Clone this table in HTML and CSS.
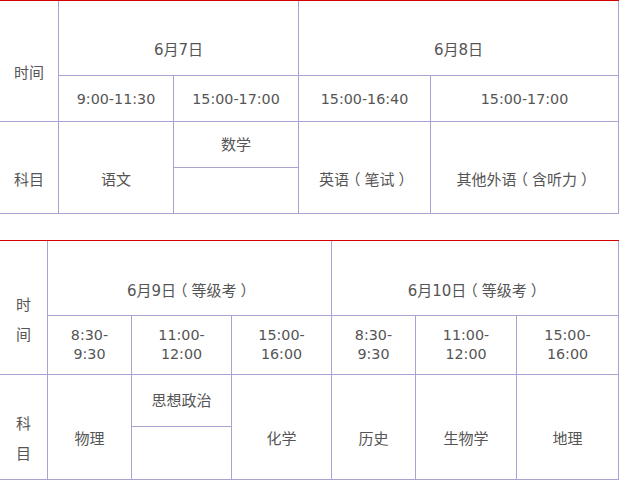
FILE: index.html
```html
<!DOCTYPE html>
<html lang="zh-CN">
<head>
<meta charset="utf-8">
<title>考试时间安排</title>
<link rel="stylesheet" href="styles.css">
</head>
<body>
<table class="exam t1">
  <colgroup>
    <col class="c59"><col class="c115"><col class="c125"><col class="c132"><col class="c188">
  </colgroup>
  <tr class="r75">
    <td rowspan="2" class="low">时间</td>
    <td colspan="2" class="low">6月7日</td>
    <td colspan="2" class="low">6月8日</td>
  </tr>
  <tr class="r46">
    <td class="tm">9:00-11:30</td>
    <td class="tm">15:00-17:00</td>
    <td class="tm">15:00-16:40</td>
    <td class="tm">15:00-17:00</td>
  </tr>
  <tr class="r46">
    <td rowspan="2" class="low">科目</td>
    <td rowspan="2" class="low">语文</td>
    <td>数学</td>
    <td rowspan="2" class="low">英语<span class="pn">（</span>笔试<span class="pn">）</span></td>
    <td rowspan="2" class="low">其他外语<span class="pn">（</span>含听力<span class="pn">）</span></td>
  </tr>
  <tr class="r46">
    <td></td>
  </tr>
</table>

<table class="exam t2">
  <colgroup>
    <col class="c48"><col class="c84"><col class="c100"><col class="c100"><col class="c84"><col class="c101"><col class="c102">
  </colgroup>
  <tr class="r75">
    <td rowspan="2" class="low tall">时<br>间</td>
    <td colspan="3" class="low">6月9日<span class="pn">（</span>等级考<span class="pn">）</span></td>
    <td colspan="3" class="low">6月10日<span class="pn">（</span>等级考<span class="pn">）</span></td>
  </tr>
  <tr class="r59">
    <td class="tm two">8:30-<br>9:30</td>
    <td class="tm two">11:00-<br>12:00</td>
    <td class="tm two">15:00-<br>16:00</td>
    <td class="tm two">8:30-<br>9:30</td>
    <td class="tm two">11:00-<br>12:00</td>
    <td class="tm two">15:00-<br>16:00</td>
  </tr>
  <tr class="r52">
    <td rowspan="2" class="low tall">科<br>目</td>
    <td rowspan="2" class="low">物理</td>
    <td>思想政治</td>
    <td rowspan="2" class="low">化学</td>
    <td rowspan="2" class="low">历史</td>
    <td rowspan="2" class="low">生物学</td>
    <td rowspan="2" class="low">地理</td>
  </tr>
  <tr class="r53">
    <td></td>
  </tr>
</table>
</body>
</html>
```
FILE: styles.css
```css
html, body {
  margin: 0;
  padding: 0;
  background: #ffffff;
}

body {
  font-family: "DejaVu Sans", "Noto Sans CJK SC", sans-serif;
  font-size: 15px;
  color: #555555;
}

.exam {
  width: 619px;
  border-collapse: separate;
  border-spacing: 0;
  border-top: 1px solid #d40000;
  table-layout: fixed;
}

.t2 {
  margin-top: 26px;
}

.exam td {
  box-sizing: border-box;
  border-right: 1px solid #aaa2d0;
  border-bottom: 1px solid #aaa2d0;
  padding: 0;
  text-align: center;
  vertical-align: middle;
  line-height: 20px;
  white-space: nowrap;
}

/* full-width brackets: half-width glyph centred in an em-wide slot */
.exam .pn {
  font-family: "Noto Sans CJK SC", sans-serif;
  font-feature-settings: "halt";
  padding: 0 4px;
}

.exam td.low {
  padding-top: 24px;
}

.exam td.tall {
  line-height: 30px;
}

.exam td.tm {
  font-size: 14.3px;
}

.exam td.two {
  line-height: 19px;
}

.c48 { width: 48px; }
.c59 { width: 59px; }
.c84 { width: 84px; }
.c100 { width: 100px; }
.c101 { width: 101px; }
.c102 { width: 102px; }
.c115 { width: 115px; }
.c125 { width: 125px; }
.c132 { width: 132px; }
.c188 { width: 188px; }

.r75 { height: 75px; }
.r59 { height: 59px; }
.r53 { height: 53px; }
.r52 { height: 52px; }
.r46 { height: 46px; }
```
